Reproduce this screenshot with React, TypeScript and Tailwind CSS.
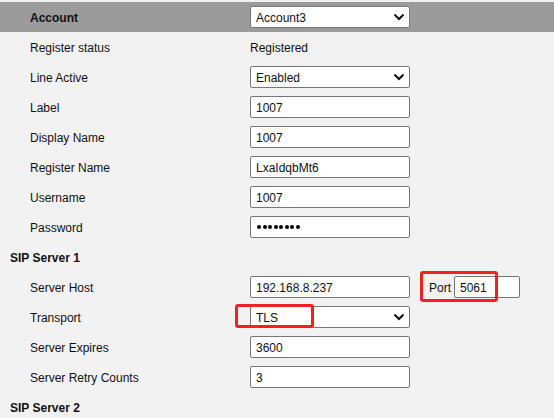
import React from "react";

const font = { fontFamily: '"Liberation Sans", Arial, sans-serif' };

function Chevron() {
  return (
    <svg width="10" height="7" viewBox="0 0 10 7" className="shrink-0">
      <path d="M1.2 1.3 L5 5 L8.8 1.3" fill="none" stroke="#111" strokeWidth="2.1" strokeLinecap="square" />
    </svg>
  );
}

function Select({ value }: { value: string }) {
  return (
    <div className="w-[160px] h-[22px] bg-white border border-[#767676] rounded-[2px] flex items-center justify-between pl-[5px] pr-[5px] text-[12px] text-[#111]">
      <span className="pt-[2px]">{value}</span>
      <Chevron />
    </div>
  );
}

function Input({ value, w = "w-[160px]" }: { value: string; w?: string }) {
  return (
    <div className={`${w} h-[22px] bg-white border border-[#767676] rounded-[2px] flex items-center pl-[5px] pt-[2px] text-[12px] text-[#111]`}>
      {value}
    </div>
  );
}

function Password() {
  return (
    <div className="w-[160px] h-[22px] bg-white border border-[#767676] rounded-[2px] flex items-center pl-[6px] gap-[1.5px]">
      {Array.from({ length: 8 }).map((_, i) => (
        <span key={i} className="w-[4px] h-[4px] rounded-full bg-black" />
      ))}
    </div>
  );
}

function Row({ label, children }: { label: string; children: React.ReactNode }) {
  return (
    <div className="h-[30px] flex items-center">
      <div className="w-[250px] pl-[30px] pt-[2px] text-[12px] text-[#111]">{label}</div>
      <div className="flex items-center">{children}</div>
    </div>
  );
}

function Section({ title }: { title: string }) {
  return (
    <div className="h-[30px] flex items-center pl-[10px] pt-[2px] text-[12px] font-bold text-[#111]">{title}</div>
  );
}

export default function App() {
  return (
    <div className="w-[554px] h-[418px] bg-[#f2f2f2] overflow-hidden pt-[2px]" style={font}>
      <div className="h-[30px] bg-[#9b9b9b] flex items-center">
        <div className="w-[250px] pl-[30px] pt-[2px] text-[12px] font-bold text-[#111]">Account</div>
        <Select value="Account3" />
      </div>
      <Row label="Register status">
        <span className="text-[12px] text-[#111] pt-[2px]">Registered</span>
      </Row>
      <Row label="Line Active">
        <Select value="Enabled" />
      </Row>
      <Row label="Label">
        <Input value="1007" />
      </Row>
      <Row label="Display Name">
        <Input value="1007" />
      </Row>
      <Row label="Register Name">
        <Input value="LxaIdqbMt6" />
      </Row>
      <Row label="Username">
        <Input value="1007" />
      </Row>
      <Row label="Password">
        <Password />
      </Row>
      <Section title="SIP Server 1" />
      <Row label="Server Host">
        <Input value="192.168.8.237" />
        <div className="relative flex items-center ml-[19px]">
          <span className="text-[12px] text-[#111] mr-[3px] pt-[2px]">Port</span>
          <Input value="5061" w="w-[66px]" />
          <div className="absolute left-[-9px] top-[-5px] w-[78px] h-[31px] border-[3px] border-[#f52020] rounded-[3px] pointer-events-none" />
        </div>
      </Row>
      <Row label="Transport">
        <div className="relative">
          <Select value="TLS" />
          <div className="absolute left-[-15px] top-[-2px] w-[79px] h-[24px] border-[3px] border-[#f52020] rounded-[3px] pointer-events-none" />
        </div>
      </Row>
      <Row label="Server Expires">
        <Input value="3600" />
      </Row>
      <Row label="Server Retry Counts">
        <Input value="3" />
      </Row>
      <Section title="SIP Server 2" />
    </div>
  );
}
